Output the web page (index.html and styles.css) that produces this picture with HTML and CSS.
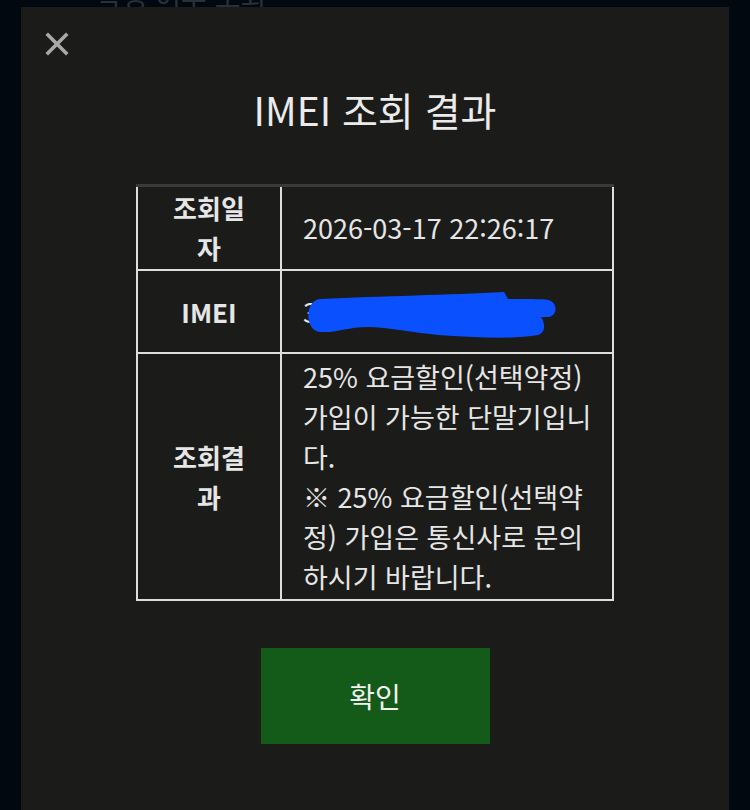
FILE: index.html
```html
<!DOCTYPE html>
<html lang="ko">
<head>
    <meta charset="UTF-8">
    <meta name="viewport" content="width=device-width, initial-scale=1.0">
    <title>IMEI 조회 결과</title>
    <link rel="stylesheet" href="styles.css">
</head>
<body>
    <p class="bg-title">약정 여부 조회</p>

    <div class="modal">
        <button class="close-btn" aria-label="닫기">
            <svg width="24" height="24" viewBox="0 0 24 24">
                <path d="M3 3 L21 21 M21 3 L3 21" stroke="#a9a9a9" stroke-width="3.6" stroke-linecap="square"/>
            </svg>
        </button>

        <h2 class="modal-title">IMEI 조회 결과</h2>

        <table class="result-table">
            <tr class="row-date">
                <th>조회일자</th>
                <td>2026-03-17 22:26:17</td>
            </tr>
            <tr class="row-imei">
                <th>IMEI</th>
                <td>
                    <span class="imei-value">
                        350000000000000
                        <!-- 번호 가림 -->
                        <svg class="scribble" width="260" height="52" viewBox="0 0 260 52">
                            <path d="M20 9 C80 6 150 5 203 2 L207 9 C230 9 245 9 247 10 C257 12 257 26 247 27 L240 27 C245 35 244 43 237 45 C210 50 170 47 137 45 C110 42 90 38 70 37 C50 36 35 43 20 42 C3 42 3 9 20 9 Z" fill="#0b50ff"/>
                        </svg>
                    </span>
                </td>
            </tr>
            <tr class="row-result">
                <th>조회결과</th>
                <td>25% 요금할인(선택약정) 가입이 가능한 단말기입니다.<br>※ 25% 요금할인(선택약정) 가입은 통신사로 문의하시기 바랍니다.</td>
            </tr>
        </table>

        <button class="confirm-btn">확인</button>
    </div>
</body>
</html>
```

FILE: styles.css
```css
* {
    margin: 0;
    padding: 0;
    box-sizing: border-box;
}

html, body {
    height: 100%;
}

body {
    font-family: 'Noto Sans CJK KR', 'Noto Sans', sans-serif;
    background-color: #020810;
    color: #e6e6e6;
    overflow: hidden;
    position: relative;
}

.bg-title {
    position: absolute;
    top: -24px;
    left: 96px;
    font-size: 28px;
    color: #2a3038;
}

.modal {
    position: relative;
    width: 708px;
    margin: 7px auto 0;
    min-height: 820px;
    background: #1b1c1a;
    padding-top: 25px;
    display: flex;
    flex-direction: column;
    align-items: center;
}

.close-btn {
    align-self: flex-start;
    margin-left: 24px;
    width: 24px;
    height: 24px;
    border: none;
    background: none;
    cursor: pointer;
    display: block;
}

.close-btn svg {
    display: block;
}

.modal-title {
    margin-top: 27px;
    font-size: 39px;
    font-weight: 400;
    line-height: 52px;
    color: #ebebeb;
}

.result-table {
    margin-top: 49px;
    width: 478px;
    border-collapse: collapse;
}

.result-table th,
.result-table td {
    border: 2px solid #dedede;
    line-height: 40px;
    vertical-align: middle;
}

.result-table tr:first-child th,
.result-table tr:first-child td {
    border-top: 3px solid #3a3a3a;
}

.result-table th {
    width: 144px;
    padding: 1px 28px;
    font-size: 26px;
    font-weight: 700;
    text-align: center;
}

.result-table td {
    padding: 1px 14px 1px 21px;
    font-size: 27px;
    text-align: left;
    font-weight: 400;
}

.row-imei th,
.row-imei td {
    height: 83px;
}

.row-result td {
    padding-top: 3px;
    padding-bottom: 2px;
}

.imei-value {
    position: relative;
    display: inline-block;
}

.scribble {
    position: absolute;
    left: -2px;
    top: -2px;
}

.confirm-btn {
    margin-top: 47px;
    width: 229px;
    height: 96px;
    border: none;
    background: #145a19;
    color: #f2f2f2;
    font-family: inherit;
    font-size: 28px;
    cursor: pointer;
}
```
